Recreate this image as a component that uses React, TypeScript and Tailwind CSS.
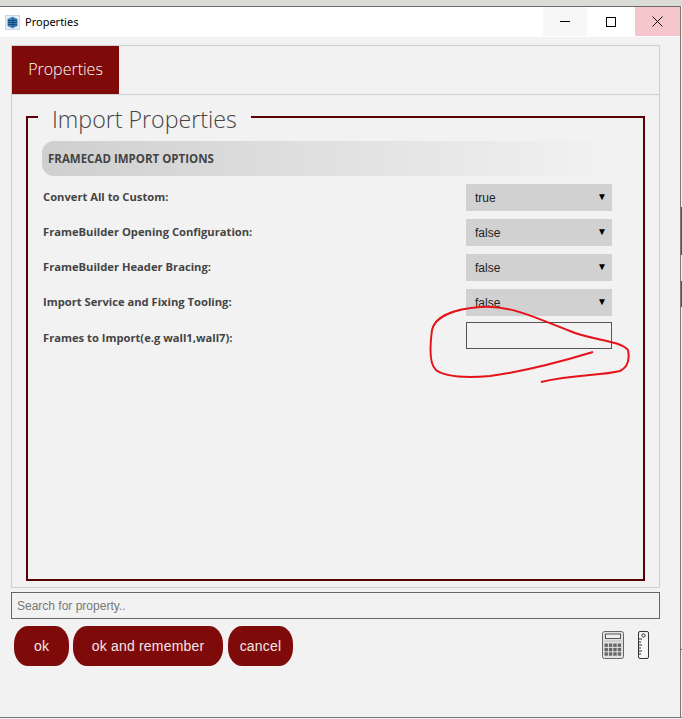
import React from "react";

const rows = [
  { label: "Convert All to Custom:", value: "true" },
  { label: "FrameBuilder Opening Configuration:", value: "false" },
  { label: "FrameBuilder Header Bracing:", value: "false" },
  { label: "Import Service and Fixing Tooling:", value: "false" },
];

function AppIcon() {
  return (
    <svg width="15" height="15" viewBox="0 0 15 15">
      <rect x="0.5" y="0.5" width="14" height="14" fill="#e4eef6" stroke="#c4d8e8" />
      <path d="M2.5 4L7.5 1.8L12.5 4V11L7.5 13.2L2.5 11Z" fill="#3a80ba" />
      <path d="M3 5.5h9M3 7.5h9M3 9.5h9M8 3v9" stroke="#174a78" strokeWidth="1" fill="none" />
    </svg>
  );
}

function Calculator() {
  const keys: React.ReactNode[] = [];
  for (let r = 0; r < 3; r++) {
    for (let c = 0; c < 4; c++) {
      keys.push(<rect key={`${r}-${c}`} x={2.5 + c * 4.4} y={12.5 + r * 4.4} width="3.4" height="3.4" fill="#666" />);
    }
  }
  return (
    <svg width="22" height="28" viewBox="0 0 22 28">
      <rect x="0.5" y="0.5" width="21" height="27" rx="2" fill="#e2e2e2" stroke="#666" />
      <rect x="3.5" y="3" width="15" height="4.5" fill="#f0f0f0" stroke="#555" />
      <path d="M2.5 10h17" stroke="#999" strokeWidth="1" strokeDasharray="1 1" />
      {keys}
    </svg>
  );
}

function Ruler() {
  return (
    <svg width="11" height="28" viewBox="0 0 11 28">
      <rect x="0.5" y="0.5" width="10" height="27" rx="1.5" fill="#f4f4f4" stroke="#333" />
      <circle cx="5.5" cy="4.5" r="1.6" fill="none" stroke="#333" />
      <path d="M1 8h3M1 11h2M1 14h3M1 17h2M1 20h3M1 23h2" stroke="#333" fill="none" />
    </svg>
  );
}

export default function App() {
  return (
    <div className="relative w-[682px] h-[719px] overflow-hidden bg-[#f2f2f2] font-['Open_Sans',sans-serif]">
      {/* Window chrome */}
      <div className="h-[6px] bg-[#dcdcd6]" />
      <div className="h-[31px] bg-white border-t border-[#6b6b6b] flex items-center mr-[2px]">
        <div className="pl-[5px] pr-[5px] flex items-center">
          <AppIcon />
        </div>
        <span className="text-[11px] text-black font-['Noto_Sans',sans-serif]">Properties</span>
        <div className="ml-auto flex h-full">
          <div className="w-[44px] h-[29px] bg-[#f7f7f7] flex items-center justify-center">
            <div className="w-[10px] h-px bg-black" />
          </div>
          <div className="w-[48px] h-[29px] flex items-center justify-center">
            <div className="w-[10px] h-[10px] border border-black" />
          </div>
          <div className="w-[45px] h-[29px] bg-[#f5c6cb] flex items-center justify-center">
            <svg width="11" height="11" viewBox="0 0 11 11">
              <path d="M0.5 0.5l10 10M10.5 0.5l-10 10" stroke="#111" strokeWidth="1" fill="none" />
            </svg>
          </div>
        </div>
      </div>

      {/* Tab panel */}
      <div className="ml-[11px] mt-[8px] w-[649px] h-[543px] border border-[#cfcfcf] flex flex-col">
        <div className="h-[49px] border-b border-[#cfcfcf] flex shrink-0">
          <div className="w-[107px] h-[48px] pb-[2px] bg-[#7f0a0a] text-white text-[16px] font-light flex items-center justify-center">
            Properties
          </div>
        </div>
        <fieldset className="ml-[14px] mt-[3px] w-[619px] h-[483px] border-2 border-[#5c0008] pl-[14px] pr-[31px] min-w-0">
          <legend className="-ml-[4px] px-[14px] pt-[5px] text-[23.2px] leading-[33px] font-light text-[#444]">Import Properties</legend>
          <div className="h-[35px] mt-[5px] rounded-l-[12px] bg-gradient-to-r from-[#cfcfcf] to-[#f2f2f2] flex items-center pl-[6px] text-[11.5px] font-bold text-[#444]">
            FRAMECAD IMPORT OPTIONS
          </div>
          <div className="mt-[8px] flex flex-col gap-[8px]">
            {rows.map((row) => (
              <div key={row.label} className="flex items-center justify-between h-[27px] pl-[1px]">
                <span className="text-[11.2px] font-bold text-[#444]">{row.label}</span>
                <div className="w-[146px] h-[27px] bg-[#d1d1d1] flex items-center justify-between pl-[9px] pr-[5px] text-[12px] text-[#222] font-['Liberation_Sans',sans-serif]">
                  {row.value}
                  <span className="text-[10px] text-black -mt-[2px]">▼</span>
                </div>
              </div>
            ))}
            <div className="flex items-center justify-between h-[27px] pl-[1px] -mt-[2px]">
              <span className="text-[11.2px] font-bold text-[#444] pt-[5px]">Frames to Import(e.g wall1,wall7):</span>
              <div className="w-[146px] h-[27px] border border-[#555]" />
            </div>
          </div>
        </fieldset>
      </div>

      {/* Search */}
      <div className="ml-[11px] mt-[4px] w-[649px] h-[27px] border border-[#666] flex items-center pl-[5px] text-[12px] text-[#777] font-['Liberation_Sans',sans-serif]">
        Search for property..
      </div>

      {/* Buttons */}
      <div className="ml-[14px] mt-[7px] mr-[33px] flex items-start font-['Liberation_Sans',sans-serif]">
        <div className="w-[55px] h-[40px] mr-[4px] rounded-[14px/18px] bg-[#7f0a0a] text-[#f3e6e6] text-[14px] tracking-[0.2px] flex items-center justify-center">ok</div>
        <div className="w-[150px] h-[40px] mr-[5px] rounded-[14px/18px] bg-[#7f0a0a] text-[#f3e6e6] text-[14px] tracking-[0.2px] flex items-center justify-center">ok and remember</div>
        <div className="w-[65px] h-[40px] rounded-[14px/18px] bg-[#7f0a0a] text-[#f3e6e6] text-[14px] tracking-[0.2px] flex items-center justify-center">cancel</div>
        <div className="ml-auto flex items-center gap-[14px] mt-[5px]">
          <Calculator />
          <Ruler />
        </div>
      </div>

      {/* Hand-drawn annotation */}
      <svg className="absolute left-0 top-0 pointer-events-none" width="682" height="719" viewBox="0 0 682 719" fill="none">
        <path
          d="M593 352C560 362 520 372 490 376C465 378 445 377 436 370C429 364 430 345 432 330C435 316 455 309 480 307C510 304 540 320 570 331C590 340 620 340 628 350C630 360 628 367 620 371C600 376 575 374 541 382"
          stroke="#e5121a"
          strokeWidth="2"
        />
      </svg>

      <div className="absolute left-0 right-0 bottom-[1px] h-px bg-[#777]" />
      <div className="absolute right-[1px] top-[6px] bottom-[1px] w-px bg-[#777]" />
      {/* Bits of the window behind, showing at the right edge */}
      <div className="absolute right-0 top-[207px] w-px h-[48px] bg-[#5a3fa8]" />
      <div className="absolute right-0 top-[281px] w-px h-[26px] bg-[#5a3fa8]" />
      <div className="absolute right-0 top-[649px] w-px h-px bg-[#3a3ac0]" />
    </div>
  );
}
